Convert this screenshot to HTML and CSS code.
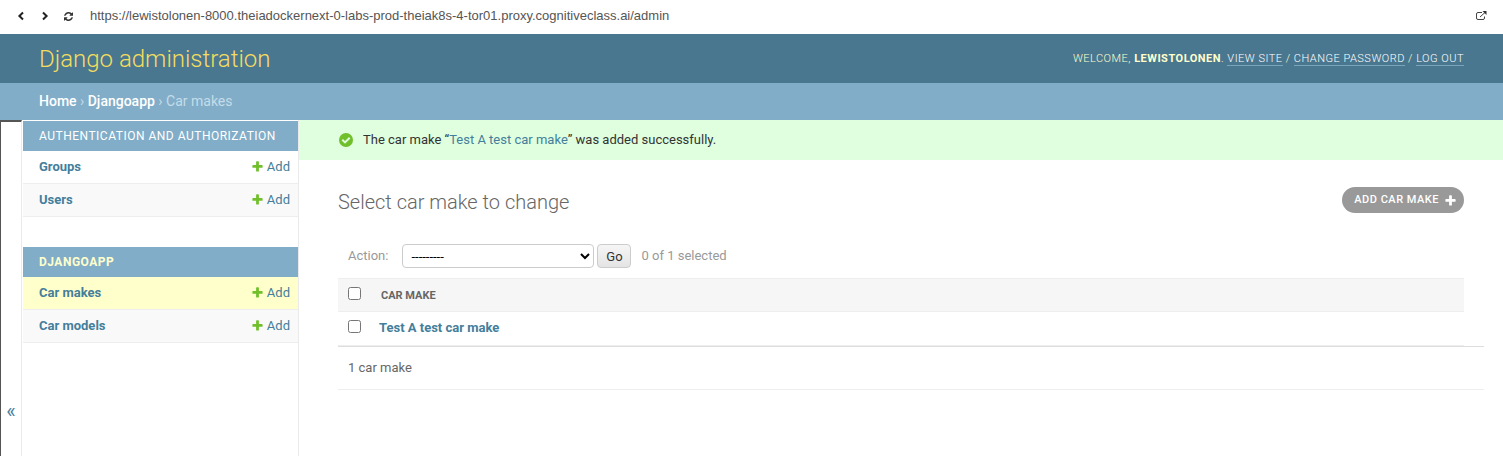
FILE: index.html
```html
<!DOCTYPE html>
<html lang="en">
<head>
<meta charset="utf-8">
<title>Select car make to change | Django site admin</title>
<link rel="stylesheet" href="styles.css">
</head>
<body>
<svg class="defs" width="0" height="0" aria-hidden="true">
  <symbol id="plus" viewBox="0 0 1792 1792"><path d="M1600 796v192q0 40-28 68t-68 28h-416v416q0 40-28 68t-68 28h-192q-40 0-68-28t-28-68v-416h-416q-40 0-68-28t-28-68v-192q0-40 28-68t68-28h416v-416q0-40 28-68t68-28h192q40 0 68 28t28 68v416h416q40 0 68 28t28 68z"/></symbol>
</svg>
<nav class="browser-bar" aria-label="Preview">
  <button class="bar-button" type="button" aria-label="Back"><svg width="10" height="10" viewBox="0 0 10 10"><path class="arrow" d="M7 1.500 3.400 5 7 8.500"/></svg></button>
  <button class="bar-button" type="button" aria-label="Forward"><svg width="10" height="10" viewBox="0 0 10 10"><path class="arrow" d="M3 1.500 6.600 5 3 8.500"/></svg></button>
  <button class="bar-button" type="button" aria-label="Reload"><svg width="9" height="9" viewBox="0 0 1536 1536"><path d="M1511 928q0 5-1 7-64 268-268 434.500T764 1536q-146 0-282.500-55T238 1324l-129 129q-19 19-45 19t-45-19-19-45V960q0-26 19-45t45-19h448q26 0 45 19t19 45-19 45l-137 137q71 66 161 102t187 36q134 0 250-65t186-179q11-17 53-117 8-23 30-23h192q13 0 22.500 9.500t9.500 22.500zm25-800v448q0 26-19 45t-45 19h-448q-26 0-45-19t-19-45 19-45l138-138Q969 256 768 256q-134 0-250 65T332 500q-11 17-53 117-8 23-30 23H50q-13 0-22.500-9.500T18 608v-7q65-268 270-434.500T768 0q146 0 284 55.500T1297 212l130-129q19-19 45-19t45 19 19 45z"/></svg></button>
  <input class="address" type="text" aria-label="Address" value="https://lewistolonen-8000.theiadockernext-0-labs-prod-theiak8s-4-tor01.proxy.cognitiveclass.ai/admin">
  <button class="bar-button" type="button" aria-label="Open in new window"><svg width="11" height="10" viewBox="0 0 11 10"><path class="thin" d="M6 1.500H2Q.5 1.500.5 3V7Q.5 8.500 2 8.500H7Q8.500 8.500 8.500 7V5.500M4 6 9 1.500"/><path d="M6.500 0H10.500V4z"/></svg></button>
</nav>
<header class="header">
  <h1 class="branding"><a href="#">Django administration</a></h1>
  <div class="user-tools">Welcome, <strong>lewistolonen</strong>. <a href="#">View site</a> / <a href="#">Change password</a> / <a href="#">Log out</a></div>
</header>
<nav class="breadcrumbs" aria-label="Breadcrumbs"><a href="#">Home</a> › <a href="#">Djangoapp</a> › Car makes</nav>
<div class="main">
  <button class="toggle" type="button" aria-label="Toggle navigation">«</button>
  <nav class="sidebar" aria-label="Sidebar">
    <table class="module">
      <caption><a href="#">Authentication and Authorization</a></caption>
      <tr><th scope="row"><a href="#">Groups</a></th><td><a class="add" href="#"><svg width="13" height="13"><use href="#plus"/></svg>Add</a></td></tr>
      <tr><th scope="row"><a href="#">Users</a></th><td><a class="add" href="#"><svg width="13" height="13"><use href="#plus"/></svg>Add</a></td></tr>
    </table>
    <table class="module">
      <caption class="current-app"><a href="#">Djangoapp</a></caption>
      <tr class="current-model"><th scope="row"><a href="#">Car makes</a></th><td><a class="add" href="#"><svg width="13" height="13"><use href="#plus"/></svg>Add</a></td></tr>
      <tr><th scope="row"><a href="#">Car models</a></th><td><a class="add" href="#"><svg width="13" height="13"><use href="#plus"/></svg>Add</a></td></tr>
    </table>
  </nav>
  <div class="page">
    <div class="message" role="status">
      <svg width="14" height="14" viewBox="0 0 14 14"><circle cx="7" cy="7" r="7" fill="#70bf2b"/><path d="M3.300 6.800 6 9.400 10.700 4.700" fill="none" stroke="#dfffdf" stroke-width="2"/></svg>
      <span>The car make “<a href="#">Test A test car make</a>” was added successfully.</span>
    </div>
    <main class="content">
      <div class="title-row">
        <h2>Select car make to change</h2>
        <a class="add-button" href="#">Add car make<svg width="13" height="13"><use href="#plus"/></svg></a>
      </div>
      <form class="changelist">
        <div class="actions">
          <label for="action">Action:</label>
          <select id="action"><option>---------</option></select>
          <button class="go" type="submit">Go</button>
          <span class="counter">0 of 1 selected</span>
        </div>
        <table class="results">
          <thead><tr><th class="check"><input type="checkbox" aria-label="Select all"></th><th scope="col"><a href="#">Car make</a></th></tr></thead>
          <tbody><tr><td class="check"><input type="checkbox" aria-label="Select Test A test car make"></td><th scope="row"><a href="#">Test A test car make</a></th></tr></tbody>
        </table>
        <p class="paginator">1 car make</p>
      </form>
    </main>
  </div>
</div>
</body>
</html>
```
FILE: styles.css
```css
* { box-sizing: border-box; }

body {
  margin: 0;
  min-height: 100vh;
  display: flex;
  flex-direction: column;
  background: #fff;
  color: #333;
  font: 13px/20px Roboto, "Liberation Sans", sans-serif;
}

a { color: #447e9b; text-decoration: none; }
svg { display: block; flex: none; }
table { border-collapse: separate; border-spacing: 0; width: 100%; }
.defs { position: absolute; }

.browser-bar {
  display: flex;
  align-items: center;
  height: 34px;
  padding: 0 16px 2px 9px;
}
.bar-button {
  width: 24px;
  padding: 0 7px;
  border: 0;
  background: none;
  color: #333;
}
.bar-button:last-child { width: 11px; padding: 0; }
.bar-button svg { fill: #333; }
.bar-button .arrow { fill: none; stroke: #222; stroke-width: 2; }
.bar-button .thin { fill: none; stroke: #444; }
.address {
  flex: 1;
  min-width: 0;
  padding: 0 8px 0 9px;
  border: 0;
  outline: 0;
  color: #555;
  font: 13px/20px "Liberation Sans", Arial, sans-serif;
}

.header {
  display: flex;
  align-items: center;
  justify-content: space-between;
  height: 49px;
  padding: 0 39px;
  background: #4a7790;
  color: #ffc;
}
.branding { margin: 0; font-size: 24px; font-weight: 300; line-height: 24px; }
.branding a { color: #f5dd5d; }
.user-tools {
  font-size: 11px;
  font-weight: 300;
  line-height: 14px;
  letter-spacing: 0.5px;
  text-transform: uppercase;
}
.user-tools strong { font-weight: 700; }
.user-tools a { color: #fff; border-bottom: 1px solid #7ba3b9; }

.breadcrumbs {
  padding: 8px 39px 9px;
  background: #81adc8;
  color: #c4dce8;
  font-size: 14px;
}
.breadcrumbs a { color: #fff; font-weight: 500; }

.main { display: flex; flex: 1; }
.toggle {
  display: flex;
  align-items: flex-start;
  justify-content: center;
  width: 22px;
  padding: 279px 0 0;
  border: 1px solid #eaeaea;
  border-width: 2px 1px 0;
  border-top-color: #555;
  border-left-color: #555;
  background: #fff;
  color: #447e9b;
  font: 20px/20px Roboto, sans-serif;
}
.sidebar {
  width: 277px;
  padding: 1px 0 0 1px;
  border-right: 1px solid #eaeaea;
}
.module { margin-bottom: 30px; }
.module caption {
  padding: 5px 16px;
  background: #81adc8;
  font-size: 12px;
  font-weight: 400;
  letter-spacing: 0.5px;
  text-align: left;
  text-transform: uppercase;
}
.module caption a { color: #fff; }
.module .current-app a { color: #ffc; font-weight: 700; }
.module th, .module td { height: 33px; padding: 0 8px 1px 16px; border-bottom: 1px solid #eee; text-align: left; }
.module tr:nth-child(2) { background: #f9f9f9; }
.module .current-model { background: #ffc; }
.module .add { display: flex; align-items: center; justify-content: flex-end; gap: 3px; }
.add svg { fill: #70bf2b; }

.page { flex: 1; min-width: 0; }
.message {
  display: flex;
  align-items: center;
  gap: 10px;
  padding: 10px 40px;
  background: #dfffdf;
}
.content { padding: 27px 39px 20px; }
.title-row { display: flex; align-items: flex-start; justify-content: space-between; }
h2 { margin: 0; padding: 4px 0; color: #666; font-size: 20px; font-weight: 300; line-height: 22px; }
.add-button {
  display: flex;
  align-items: center;
  gap: 5px;
  height: 26px;
  padding: 0 7px 1px 12px;
  border-radius: 13px;
  background: #999;
  color: #fff;
  font-size: 11px;
  font-weight: 500;
  letter-spacing: 0.5px;
  text-transform: uppercase;
}
.add-button svg { margin-top: 1px; fill: #fff; }

.actions {
  display: flex;
  align-items: center;
  padding: 27px 10px 10px;
  color: #999;
}
select {
  width: 192px;
  height: 24px;
  margin: 0 3px 0 14px;
  padding: 0 4px;
  border: 1px solid #ccc;
  border-radius: 4px;
  background: #fff;
  color: #000;
  font: 13px Roboto, sans-serif;
}
.go {
  width: 34px;
  height: 24px;
  padding: 1px 0 0;
  border: 1px solid #ccc;
  border-radius: 4px;
  background: linear-gradient(#f6f6f6, #e4e4e4);
  color: #333;
  font: 13px Roboto, sans-serif;
}
.counter { margin-left: 10px; }

.results th, .results td { padding: 0; text-align: left; border-bottom: 1px solid #eee; }
.results thead th { height: 34px; border-top: 1px solid #eee; background: #f6f6f6; font-size: 11px; }
.results thead a { display: block; padding: 2px 0 0 2px; color: #666; text-transform: uppercase; }
.results tbody tr > * { height: 34px; padding-bottom: 2px; }
.results .check { width: 41px; padding-left: 10px; }
.check input { display: block; width: 13px; height: 13px; margin: 0 0 3px; }
.paginator {
  margin: 0 -20px 0 0;
  padding: 11px 10px;
  border: 1px solid #eee;
  border-width: 1px 0;
  border-top-color: #ddd;
  color: #666;
}
```
